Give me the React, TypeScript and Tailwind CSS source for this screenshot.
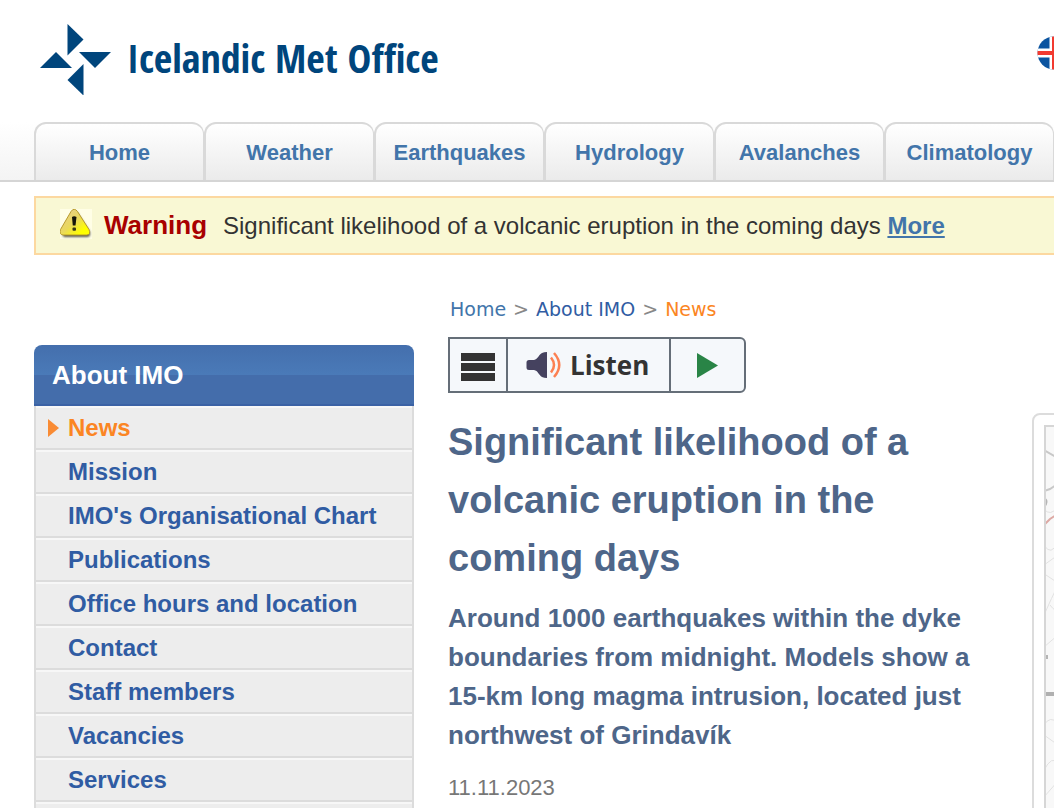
const tabs = ['Home', 'Weather', 'Earthquakes', 'Hydrology', 'Avalanches', 'Climatology'];

const menuItems = [
  'News',
  'Mission',
  "IMO's Organisational Chart",
  'Publications',
  'Office hours and location',
  'Contact',
  'Staff members',
  'Vacancies',
  'Services',
];

function Logo() {
  return (
    <svg className="w-[71px] h-[71px] shrink-0" viewBox="0 0 71 71" fill="#00457c" aria-hidden="true">
      <path d="M27.5 0 L43.5 15.500 L27.5 31.500 Z" />
      <path d="M39 28 H71 L55 44 Z" />
      <path d="M0 44 L16 28 L32 44 Z" />
      <path d="M43.500 40 V71.500 L27.500 56 Z" />
    </svg>
  );
}

function FlagIcon() {
  return (
    <svg className="w-[34px] h-[34px]" viewBox="0 0 34 34" aria-hidden="true">
      <defs>
        <clipPath id="flag-round">
          <circle cx="17" cy="17" r="16.500" />
        </clipPath>
      </defs>
      <g clipPath="url(#flag-round)">
        <rect width="34" height="34" fill="#0b54a0" />
        <path d="M0 17 H34 M17 0 V34" stroke="#fff" strokeWidth="9" />
        <path d="M0 17 H34 M17 0 V34" stroke="#f23a30" strokeWidth="4" />
      </g>
    </svg>
  );
}

function WarningIcon() {
  return (
    <svg className="mb-1 w-8 h-[30px] shrink-0 bg-[#fffee6]" viewBox="0 0 32 30" aria-hidden="true">
      <defs>
        <linearGradient id="warn-fill" x1="0" y1="0" x2="1" y2="1">
          <stop offset="0.2" stopColor="#e8d080" />
          <stop offset="0.5" stopColor="#ead95a" />
          <stop offset="0.8" stopColor="#ffff00" />
        </linearGradient>
        <filter id="warn-blur" x="-20%" y="-20%" width="140%" height="140%">
          <feGaussianBlur stdDeviation="1" />
        </filter>
      </defs>
      <path d="M16 2 L30 23 Q31 28 27 28 H5 Q2 28 3 24 Z" fill="#55534a" filter="url(#warn-blur)" />
      <path
        d="M11 2.500 Q14 -2 17.500 2.500 L29 20.500 Q31 25.500 27 26 H3 Q-1 25.500 0.500 20.500 Z"
        fill="url(#warn-fill)"
        stroke="#b89a2c"
      />
      <path d="M12 8 Q14 6.500 16.500 8 L15.500 16.500 H12.800 Z" fill="#14140a" />
      <rect x="12.500" y="18.500" width="3.500" height="3.200" rx="1" fill="#3a3818" />
    </svg>
  );
}

function SpeakerIcon() {
  return (
    <svg className="w-9 h-7" viewBox="0 0 36 28" aria-hidden="true">
      <path
        d="M3 9 H8 C12 8 13 3.500 16 2 Q18 1 21 1 V27 Q18 27 16 26 C13 24.500 12 19.500 8 19 H3 Q0.500 19 0.500 16.500 V11.500 Q0.500 9 3 9 Z"
        fill="#45425f"
      />
      <path d="M25 6.500 Q31 14 25 21.500" fill="none" stroke="#fc8052" strokeWidth="2.500" />
      <path d="M28 2 Q38.500 14 28 26" fill="none" stroke="#fc8052" strokeWidth="2.500" />
    </svg>
  );
}

function MapThumb() {
  return (
    <svg className="w-full h-[480px]" viewBox="0 0 360 480" preserveAspectRatio="xMinYMin slice" aria-label="Map of the area">
      <rect width="360" height="480" fill="#f8f8f8" />
      <g fill="none" stroke="#e2e2e2">
        <path d="M0 84 Q6 92 14 82 M0 120 Q7 132 14 117 M0 140 L14 130 M2 150 L14 158" />
        <path d="M0 190 Q8 172 14 160 M6 180 Q12 188 14 184 M0 222 L14 210 M0 300 Q6 290 14 298" />
        <path d="M0 310 L14 320 M0 345 Q8 330 14 338 M0 372 L14 356" />
      </g>
      <path d="M0 66 L6 64 L12 60 M0 25 L12 32" stroke="#c8c8c8" strokeWidth="2" fill="none" />
      <path d="M1 72 Q6 77 1 82 Z M1 230 h3 v4 h-3 Z" fill="#b5b5b5" />
      <path d="M0 100 L6 94 L12 90" stroke="#dda9a4" strokeWidth="2" fill="none" />
      <path d="M0 269 H360" stroke="#b0b0b0" strokeWidth="4" />
      <path d="M1 0 V480 M0 1 H360" stroke="#d6d6d6" strokeWidth="2" />
    </svg>
  );
}

export default function App() {
  return (
    <div className="h-screen overflow-hidden bg-white font-['Liberation_Sans',Arial,sans-serif]">
      {/* Header */}
      <header>
        <div className="flex h-[122px] items-start justify-between pl-10 pt-6">
          <a href="#" className="flex items-start gap-4 text-[#00457c]">
            <Logo />
            <span className="whitespace-nowrap font-['Liberation_Sans_Narrow','Open_Sans_Condensed','Roboto_Condensed',sans-serif] text-[40px] font-bold leading-[68px]">
              Icelandic Met Office
            </span>
          </a>
          <button aria-label="Íslenska" className="-mr-[17px] mt-3">
            <FlagIcon />
          </button>
        </div>

        {/* Main navigation */}
        <nav className="flex h-[60px] overflow-hidden border-b-2 border-[#d5d5d5] bg-linear-to-b from-white to-[#f4f4f4] pl-[34px]">
          {tabs.map((tab) => (
            <a
              key={tab}
              href="#"
              className="flex w-[170px] shrink-0 items-center justify-center rounded-t-xl border-l-2 border-r border-t-2 border-[#d9d9d9] bg-linear-to-b from-white to-[#ebebeb] text-[22px] font-bold text-[#4275aa]"
            >
              {tab}
            </a>
          ))}
        </nav>
      </header>

      {/* Warning */}
      <div className="ml-[34px] mt-3.5 flex h-[59px] items-center border-y-2 border-l-2 border-[#fcd8a0] bg-[#f9f8d4] pl-6 text-2xl text-[#333]">
        <WarningIcon />
        <strong className="ml-3 text-[26px] text-[#a80000]">Warning</strong>
        <p className="ml-4 whitespace-nowrap">
          Significant likelihood of a volcanic eruption in the coming days{' '}
          <a href="#" className="font-bold text-[#4275aa] underline">
            More
          </a>
        </p>
      </div>

      <div className="flex items-start pl-[34px] pt-10">
        {/* Side menu */}
        <aside className="mt-[50px] w-[380px] shrink-0">
          <h2 className="h-[61px] rounded-t-lg border-b-2 border-[#3b62a5] bg-linear-to-b from-[#446fad] from-0% via-[#4a7ab8] via-50% to-[#446dab] to-50% pl-[18px] text-[26px] font-bold leading-[61px] text-white">
            About IMO
          </h2>
          <ul className="border-x-2 border-[#dcdcdc] bg-[#ededed]">
            {menuItems.map((item, i) => (
              <li key={item} className="h-11 border-b-2 border-t-2 border-b-[#dcdcdc] border-t-[#f7f7f7]">
                <a
                  href="#"
                  className={`flex h-10 items-center text-2xl font-bold ${i === 0 ? 'text-[#fb8523]' : 'text-[#305ca3]'}`}
                >
                  <span className="flex w-8 pl-3">
                    {i === 0 && (
                      <svg className="w-[11px] h-[18px]" viewBox="0 0 11 18" fill="#f98b34" aria-hidden="true">
                        <path d="M0 0 L11 9 L0 18 Z" />
                      </svg>
                    )}
                  </span>
                  {item}
                </a>
              </li>
            ))}
            <li className="h-11 border-t-2 border-[#f7f7f7]" />
          </ul>
        </aside>

        {/* Article */}
        <main className="ml-[34px] w-[560px] shrink-0">
          <nav aria-label="Breadcrumb" className="flex h-7 items-center gap-[7px] pl-0.5 font-['DejaVu_Sans',Verdana,sans-serif] text-[19px] text-[#888]">
            <a href="#" className="text-[#4275aa]">Home</a>
            <span>&gt;</span>
            <a href="#" className="text-[#305ca3]">About IMO</a>
            <span>&gt;</span>
            <a href="#" className="text-[#fb8523]">News</a>
          </nav>

          <div className="mt-3.5 flex h-14 w-[298px] overflow-hidden rounded-r-md border-2 border-[#656e78] bg-[#f5f8fb]">
            <button aria-label="Menu" className="flex w-[58px] flex-col items-center justify-center gap-0.5 border-r-2 border-[#656e78] pt-1">
              <span className="h-2 w-[34px] bg-[#333]" />
              <span className="h-2 w-[34px] bg-[#333]" />
              <span className="h-2 w-[34px] bg-[#333]" />
            </button>
            <button className="flex flex-1 items-center gap-2 border-r-2 border-[#656e78] pl-[18px] font-['Open_Sans','Noto_Sans',sans-serif] text-[26px] font-bold text-[#333]">
              <SpeakerIcon />
              Listen
            </button>
            <button aria-label="Play" className="flex w-[73px] items-center justify-center">
              <svg className="w-[21px] h-[25px]" viewBox="0 0 21 25" fill="#298446">
                <path d="M0 0 L21 12.500 L0 25 Z" />
              </svg>
            </button>
          </div>

          <h1 className="mt-5 text-[38px] font-bold leading-[58px] text-[#4e6689]">
            Significant likelihood of a volcanic eruption in the coming days
          </h1>
          <p className="mt-3 text-[26px] font-bold leading-[39px] text-[#4e6689]">
            Around 1000 earthquakes within the dyke boundaries from midnight. Models show a 15-km long magma
            intrusion, located just northwest of Grindavík
          </p>
          <time dateTime="2023-11-11" className="mt-4 block text-[22px] text-[#777]">
            11.11.2023
          </time>
        </main>

        <figure className="ml-6 mt-[118px] w-[380px] shrink-0 rounded-lg border-2 border-[#dcdcdc] p-2.5">
          <MapThumb />
        </figure>
      </div>
    </div>
  );
}
